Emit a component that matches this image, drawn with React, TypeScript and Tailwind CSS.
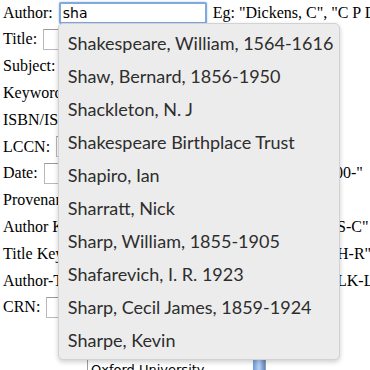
import React from "react";

const suggestions = [
  "Shakespeare, William, 1564-1616",
  "Shaw, Bernard, 1856-1950",
  "Shackleton, N. J",
  "Shakespeare Birthplace Trust",
  "Shapiro, Ian",
  "Sharratt, Nick",
  "Sharp, William, 1855-1905",
  "Shafarevich, I. R. 1923",
  "Sharp, Cecil James, 1859-1924",
  "Sharpe, Kevin",
];

type Row = { label: string; tail?: string; shift?: string };

const rows: Row[] = [
  { label: "Title:" },
  { label: "Subject:" },
  { label: "Keywords:" },
  { label: "ISBN/ISSN:" },
  { label: "LCCN:" },
  { label: "Date:", tail: '1900-"', shift: "-ml-[17px]" },
  { label: "Provenance:" },
  { label: "Author Keyword:", tail: 'S-C"', shift: "ml-[1px]" },
  { label: "Title Keyword:", tail: 'H-R"', shift: "ml-[1px]" },
  { label: "Author-Title:", tail: "LK-L", shift: "ml-[1px]" },
  { label: "CRN:" },
];

function TextBox() {
  return (
    <span className="inline-block ml-[2px] h-[21px] w-[150px] align-middle bg-white border border-[#b9b9b9] border-t-[#9a9a9a]" />
  );
}

export default function App() {
  return (
    <div className="w-[370px] h-[370px] overflow-hidden bg-white text-black font-['Liberation_Serif','Times_New_Roman',serif] text-[16px] whitespace-nowrap">
      {/* Author row with autocomplete */}
      <div className="h-[26px] flex items-center pl-[3px]">
        <span>Author:&nbsp;</span>
        <div className="relative ml-[2px]">
          <div className="h-[22px] w-[148px] border-2 border-[#80a9dc] rounded-[2px] bg-white flex items-center pl-[2px] font-['DejaVu_Sans',sans-serif] text-[14px] text-black shadow-[0_0_2px_rgba(90,140,210,0.6)]">
            sha
          </div>
          <div className="absolute top-[21px] -left-[1px] z-10 w-[282px] pt-[3px] pb-[2px] bg-[#ececec] border border-[#d2d2d2] rounded-[5px] shadow-[0_2px_5px_rgba(0,0,0,0.2)] font-['Lato',sans-serif] text-[18px] text-[#2e2e2e]">
            {suggestions.map((s) => (
              <div key={s} className="h-[33px] flex items-center pl-[9px]">
                {s}
              </div>
            ))}
          </div>
        </div>
        <span className="ml-[6px]">Eg: "Dickens, C", "C P Dickens"</span>
      </div>

      {rows.map((r) => (
        <div key={r.label} className="h-[26.8px] grid grid-cols-[336px_1fr] items-center">
          <div className="pl-[3px] flex items-center overflow-hidden">
            <span>{r.label}&nbsp;</span>
            <TextBox />
          </div>
          <div className="overflow-hidden">
            <span className={"inline-block " + (r.shift ?? "")}>{r.tail}</span>
          </div>
        </div>
      ))}

      {/* Library list box */}
      <div className="mt-[38px] ml-[87px] w-[179px] h-[60px] flex border border-[#9d9d9d] bg-white">
        <div className="flex-1 pl-[3px] pt-[2px] font-['DejaVu_Sans',sans-serif] text-[13px] leading-[16px]">
          Oxford University
        </div>
        <div className="w-[12px] bg-gradient-to-r from-[#6d98d8] via-[#b9d2f2] to-[#5c87c8]" />
      </div>
    </div>
  );
}
